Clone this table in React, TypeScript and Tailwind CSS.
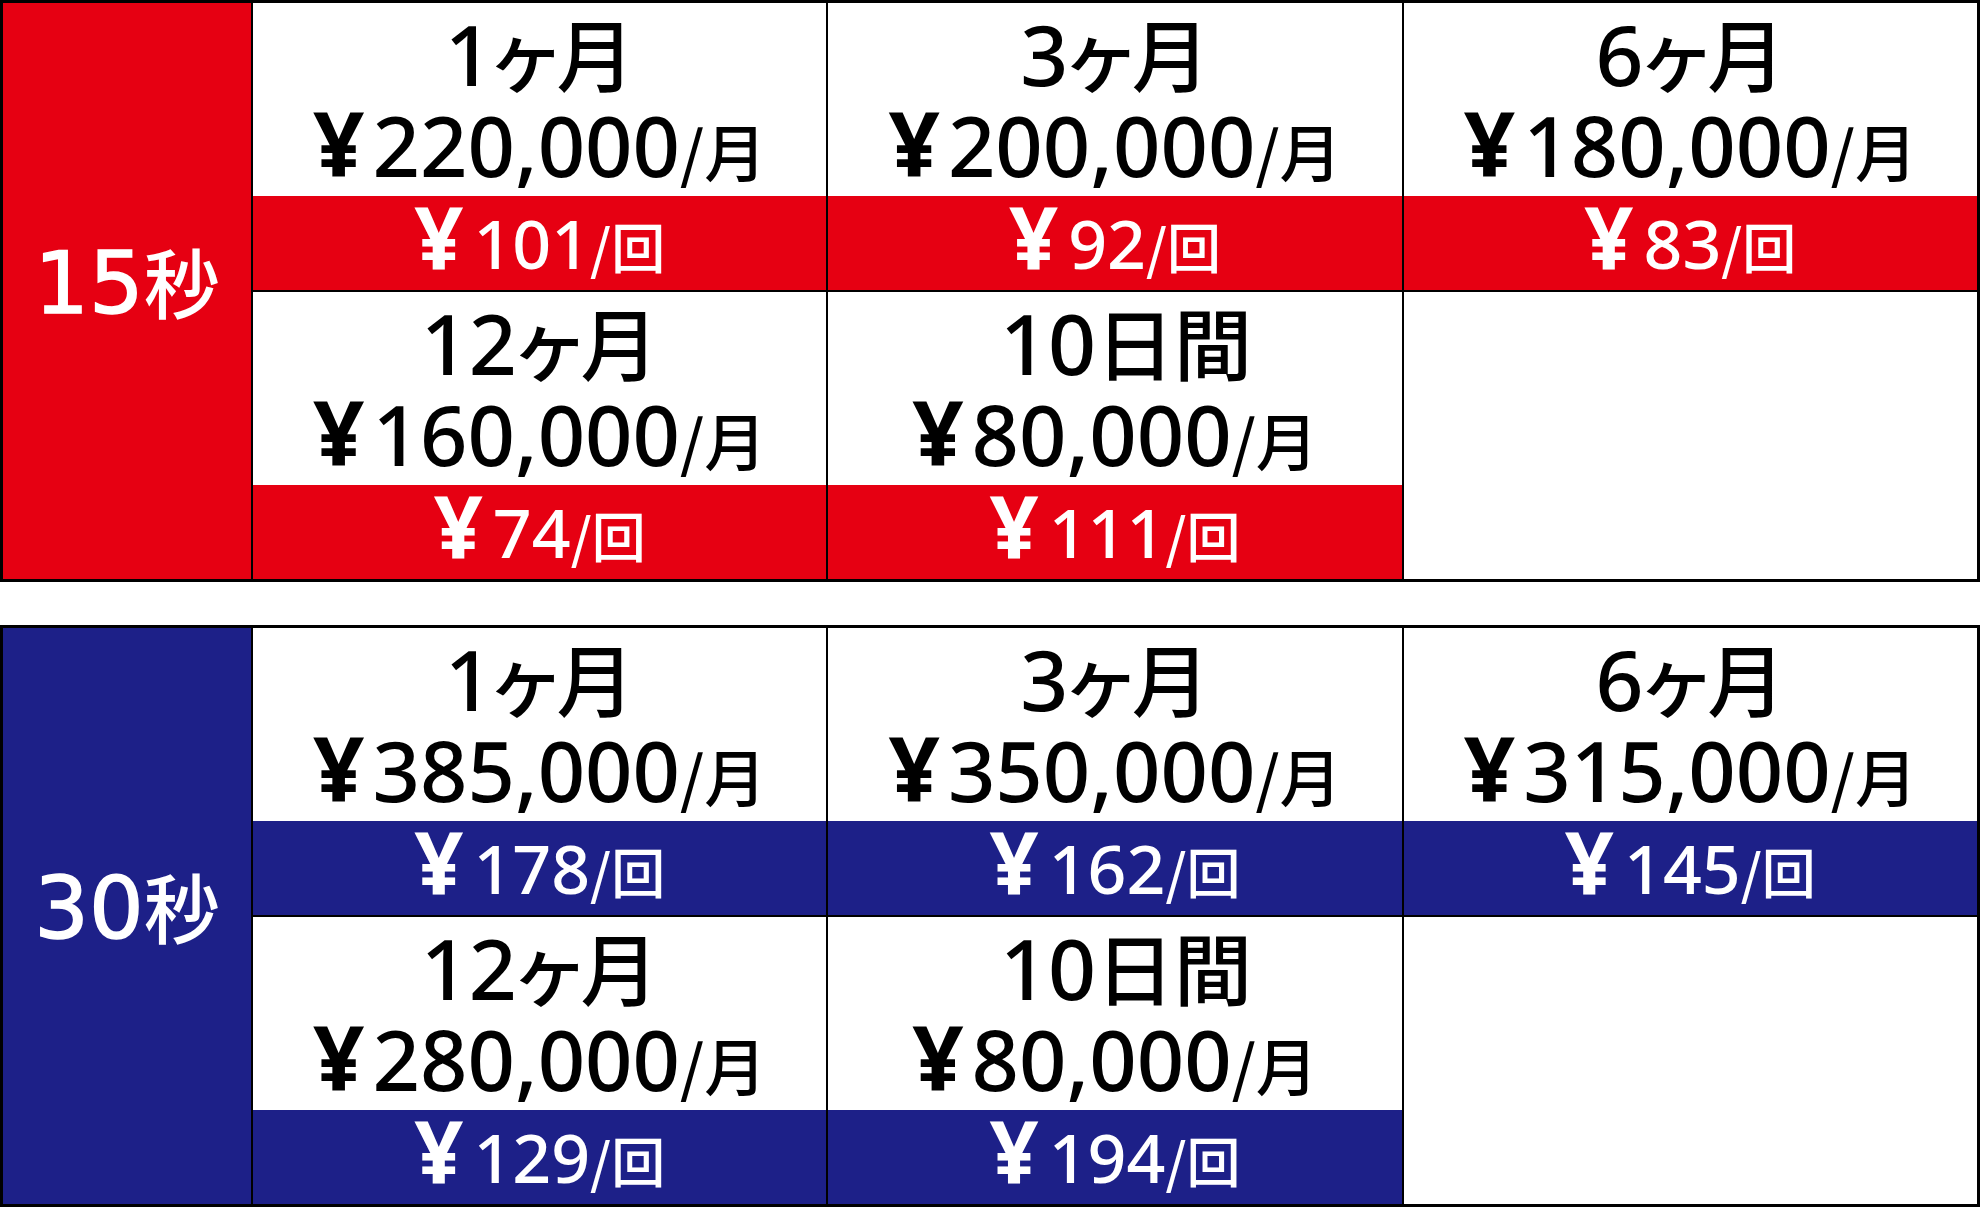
import React from "react";

type Item = { n: string; u: string; price: string; per: string } | null;

const table1: Item[][] = [
  [
    { n: "1", u: "ヶ月", price: "220,000", per: "101" },
    { n: "3", u: "ヶ月", price: "200,000", per: "92" },
    { n: "6", u: "ヶ月", price: "180,000", per: "83" },
  ],
  [
    { n: "12", u: "ヶ月", price: "160,000", per: "74" },
    { n: "10", u: "日間", price: "80,000", per: "111" },
    null,
  ],
];

const table2: Item[][] = [
  [
    { n: "1", u: "ヶ月", price: "385,000", per: "178" },
    { n: "3", u: "ヶ月", price: "350,000", per: "162" },
    { n: "6", u: "ヶ月", price: "315,000", per: "145" },
  ],
  [
    { n: "12", u: "ヶ月", price: "280,000", per: "129" },
    { n: "10", u: "日間", price: "80,000", per: "194" },
    null,
  ],
];

function Cell({ item, band, first }: { item: Item; band: string; first: boolean }) {
  const border = first ? "" : "border-l-2 border-black";
  if (!item) return <div className={`flex-1 bg-white ${border}`} />;
  const shift = item.u === "日間" ? "pl-[22px]" : "";
  return (
    <div className={`flex-1 flex flex-col ${border}`}>
      <div className="h-[193px] bg-white pt-[9px] text-black text-center">
        <div className={`h-[85px] leading-[85px] whitespace-nowrap ${shift}`}>
          <span className="font-['Noto_Sans','Noto_Sans_CJK_JP',sans-serif] text-[84px] font-medium leading-none">
            {item.n}
          </span>
          <span className="font-['Noto_Sans_CJK_JP',sans-serif] text-[78px] font-medium leading-none [font-feature-settings:'palt']">
            {item.u}
          </span>
        </div>
        <div className="h-[85px] leading-[85px] whitespace-nowrap">
          <span className="font-['Noto_Sans','Noto_Sans_CJK_JP',sans-serif] text-[90px] font-bold leading-none mr-[8px]">
            ¥
          </span>
          <span className="font-['Noto_Sans','Noto_Sans_CJK_JP',sans-serif] text-[83px] font-medium leading-none">
            {item.price}
          </span>
          <span className="font-['Noto_Sans_CJK_JP',sans-serif] text-[62px] font-medium leading-none">
            /月
          </span>
        </div>
      </div>
      <div className={`h-[94px] ${band} text-white flex justify-center items-baseline whitespace-nowrap overflow-hidden`}>
        <span className="font-['Noto_Sans','Noto_Sans_CJK_JP',sans-serif] text-[86px] font-bold leading-[80px] mr-[10px]">
          ¥
        </span>
        <span className="font-['Noto_Sans','Noto_Sans_CJK_JP',sans-serif] text-[68px] font-medium leading-none">
          {item.per}
        </span>
        <span className="font-['Noto_Sans_CJK_JP',sans-serif] text-[54px] font-medium leading-none">
          /回
        </span>
      </div>
    </div>
  );
}

function PriceTable({ label, rows, color }: { label: string; rows: Item[][]; color: "red" | "blue" }) {
  const bg = color === "red" ? "bg-[#e60012]" : "bg-[#1d2088]";
  return (
    <div className="flex w-full h-[582px] border-[3px] border-black">
      <div className={`w-[250px] shrink-0 ${bg} border-r-2 border-black flex items-center justify-center pb-[16px]`}>
        <span className="text-white whitespace-nowrap leading-none">
          <span className="font-['DejaVu_Sans',sans-serif] text-[86px] [-webkit-text-stroke:1.5px_white]">
            {label.slice(0, 2)}
          </span>
          <span className="font-['Noto_Sans_CJK_JP',sans-serif] text-[76px] font-medium">{label.slice(2)}</span>
        </span>
      </div>
      <div className="flex-1 flex flex-col">
        {rows.map((row, ri) => (
          <div key={ri} className={`flex ${ri === 0 ? "border-b-2 border-black" : ""}`}>
            {row.map((item, ci) => (
              <Cell key={ci} item={item} band={bg} first={ci === 0} />
            ))}
          </div>
        ))}
      </div>
    </div>
  );
}

export default function App() {
  return (
    <div className="w-[1980px] h-[1208px] bg-white flex flex-col gap-[43px] overflow-hidden">
      <PriceTable label="15秒" rows={table1} color="red" />
      <PriceTable label="30秒" rows={table2} color="blue" />
    </div>
  );
}
